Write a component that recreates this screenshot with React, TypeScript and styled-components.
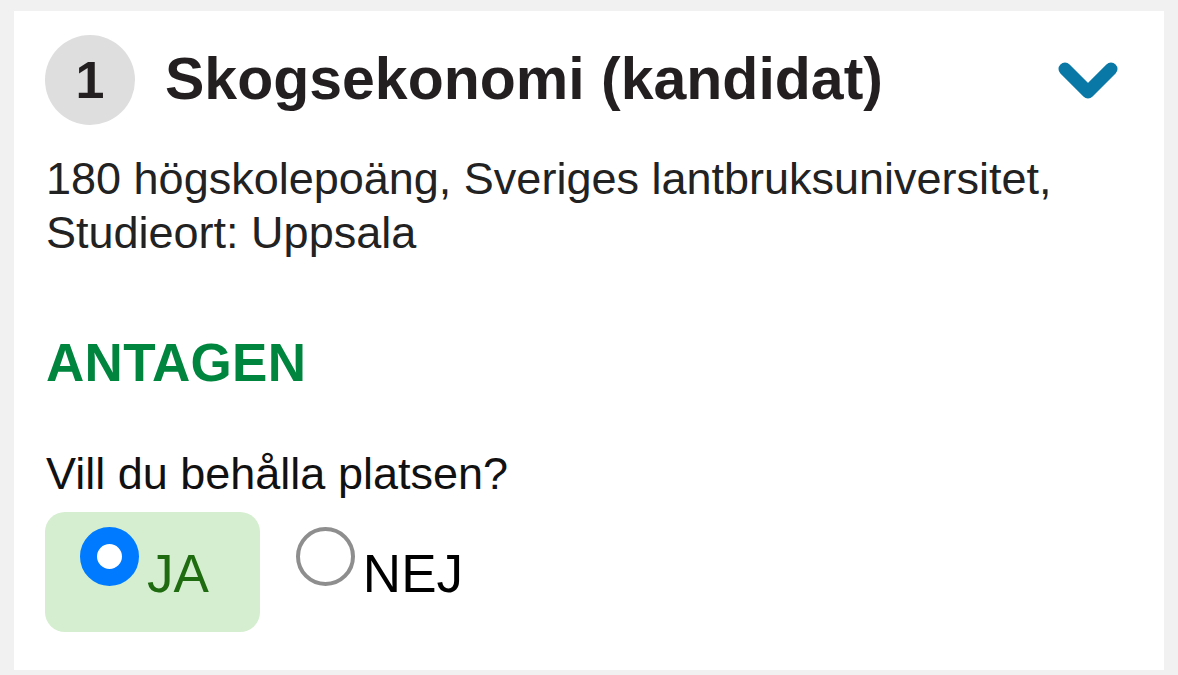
import React, { useState } from 'react';
import styled, { createGlobalStyle } from 'styled-components';

const GlobalStyle = createGlobalStyle`
  html, body {
    margin: 0;
    padding: 0;
    background: #f1f1f1;
  }
  body {
    font-family: "Liberation Sans", Arial, sans-serif;
  }
`;

const Page = styled.div`
  padding: 11px 14px 5px;
`;

const Card = styled.section`
  background: #ffffff;
  padding: 24px 46px 38px 31px;
  min-height: 597px;
  box-sizing: border-box;
`;

const Header = styled.div`
  display: flex;
  align-items: center;
  gap: 30px;
`;

const Rank = styled.div`
  flex: 0 0 auto;
  width: 90px;
  height: 90px;
  border-radius: 50%;
  background: #dedede;
  color: #231f20;
  font-size: 52px;
  font-weight: 700;
  display: flex;
  align-items: center;
  justify-content: center;
`;

const Title = styled.h2`
  flex: 1;
  margin: 0;
  font-size: 59px;
  font-weight: 700;
  color: #231f20;
  line-height: 1.15;
`;

const Toggle = styled.button`
  border: 0;
  background: none;
  padding: 0;
  display: flex;
  cursor: pointer;
`;

const Description = styled.p`
  margin: 27px 0 0 1px;
  font-size: 45px;
  line-height: 54px;
  color: #222222;
`;

const Status = styled.div`
  margin: 73px 0 0 1px;
  font-size: 53px;
  font-weight: 700;
  line-height: 60px;
  color: #00853f;
  letter-spacing: 0.3px;
`;

const Question = styled.p`
  margin: 54px 0 0 1px;
  font-size: 45px;
  line-height: 54px;
  color: #111111;
`;

const Options = styled.div`
  display: flex;
  align-items: flex-start;
  gap: 36px;
  margin-top: 11px;
`;

const Option = styled.label<{ $checked: boolean }>`
  display: flex;
  align-items: flex-start;
  gap: 8px;
  box-sizing: border-box;
  height: 120px;
  padding: 15px ${(p) => (p.$checked ? '51px' : '0')} 0
    ${(p) => (p.$checked ? '35px' : '0')};
  border-radius: 20px;
  background: ${(p) => (p.$checked ? '#d4eecf' : 'transparent')};
  color: ${(p) => (p.$checked ? '#1f6b10' : '#000000')};
  font-size: 53px;
  cursor: pointer;
`;

const HiddenInput = styled.input`
  position: absolute;
  opacity: 0;
  pointer-events: none;
`;

const Dot = styled.span<{ $checked: boolean }>`
  flex: 0 0 auto;
  box-sizing: border-box;
  width: 59px;
  height: 59px;
  border-radius: 50%;
  border: ${(p) => (p.$checked ? '17px solid #007aff' : '4px solid #8e8e8e')};
  background: #ffffff;
`;

const OptionText = styled.span`
  line-height: 60px;
  margin-top: 17px;
`;

export default function App() {
  const [keep, setKeep] = useState<'ja' | 'nej'>('ja');

  return (
    <>
      <GlobalStyle />
      <Page>
        <Card>
          <Header>
            <Rank>1</Rank>
            <Title>Skogsekonomi (kandidat)</Title>
            <Toggle aria-label="Visa mer">
              <svg width="60" height="40" viewBox="0 0 60 40">
                <polyline
                  points="7,9 30,32 53,9"
                  fill="none"
                  stroke="#0a78a6"
                  strokeWidth="13"
                  strokeLinecap="round"
                  strokeLinejoin="round"
                />
              </svg>
            </Toggle>
          </Header>
          <Description>
            180 högskolepoäng, Sveriges lantbruksuniversitet,
            <br />
            Studieort: Uppsala
          </Description>
          <Status>ANTAGEN</Status>
          <Question>Vill du behålla platsen?</Question>
          <Options>
            <Option $checked={keep === 'ja'}>
              <HiddenInput
                type="radio"
                name="keep"
                checked={keep === 'ja'}
                onChange={() => setKeep('ja')}
              />
              <Dot $checked={keep === 'ja'} />
              <OptionText>JA</OptionText>
            </Option>
            <Option $checked={keep === 'nej'}>
              <HiddenInput
                type="radio"
                name="keep"
                checked={keep === 'nej'}
                onChange={() => setKeep('nej')}
              />
              <Dot $checked={keep === 'nej'} />
              <OptionText>NEJ</OptionText>
            </Option>
          </Options>
        </Card>
      </Page>
    </>
  );
}
